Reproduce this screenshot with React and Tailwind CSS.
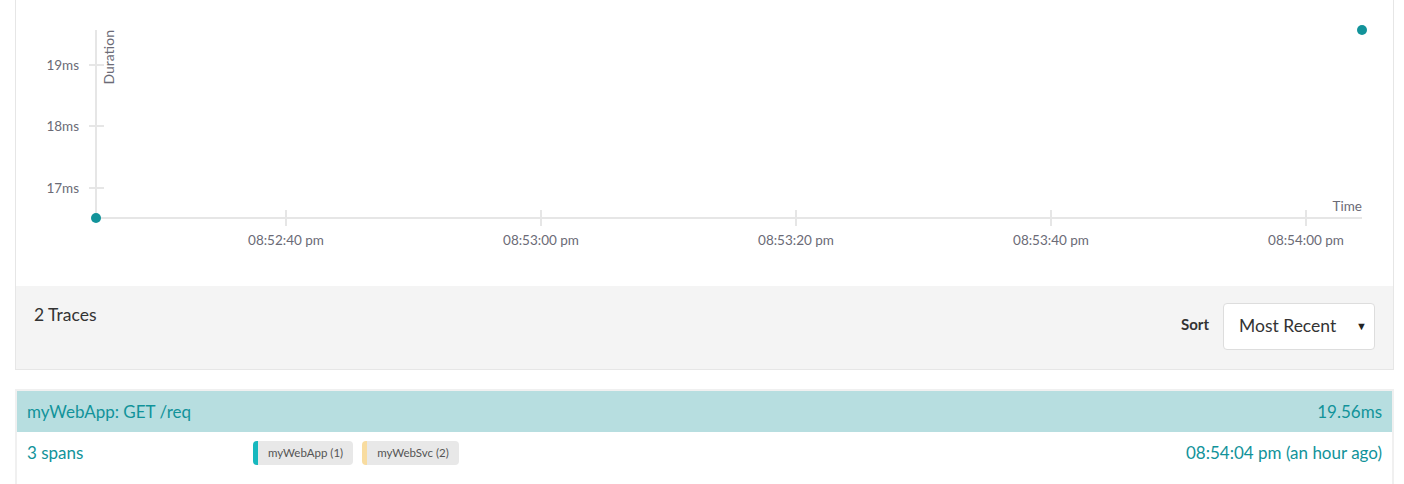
import React from 'react';

const TEAL = '#12939a';
const AXIS = '#e6e6e6';
const LABEL = '#6b6b76';

const yTicks = [
  { y: 65, label: '19ms' },
  { y: 126, label: '18ms' },
  { y: 188, label: '17ms' },
];

const xTicks = [
  { x: 286, label: '08:52:40 pm' },
  { x: 541, label: '08:53:00 pm' },
  { x: 796, label: '08:53:20 pm' },
  { x: 1051, label: '08:53:40 pm' },
  { x: 1306, label: '08:54:00 pm' },
];

function ScatterPlot() {
  return (
    <svg width="1376" height="286" viewBox="16 0 1376 286" className="block">
      <g fontFamily="Lato, sans-serif" fill={LABEL}>
        {yTicks.map((t) => (
          <g key={t.label}>
            <line x1="89" x2="104" y1={t.y} y2={t.y} stroke={AXIS} strokeWidth="2" />
            <text x="79" y={t.y + 5} textAnchor="end" fontSize="13.5">{t.label}</text>
          </g>
        ))}
        {xTicks.map((t) => (
          <g key={t.label}>
            <line x1={t.x} x2={t.x} y1="210" y2="226" stroke={AXIS} strokeWidth="2" />
            <text x={t.x} y="245" textAnchor="middle" fontSize="13.5">{t.label}</text>
          </g>
        ))}
        <line x1="96" x2="96" y1="30" y2="218" stroke={AXIS} strokeWidth="2" />
        <line x1="96" x2="1362" y1="218" y2="218" stroke={AXIS} strokeWidth="2" />
        <text x="0" y="0" fontSize="14" textAnchor="end" transform="translate(114 30) rotate(-90)">Duration</text>
        <text x="1362" y="211" fontSize="13.5" textAnchor="end">Time</text>
      </g>
      <circle cx="96" cy="218" r="5" fill={TEAL} />
      <circle cx="1362" cy="30" r="5" fill={TEAL} />
    </svg>
  );
}

function ServiceTag({ name, count, color }) {
  return (
    <span
      className="inline-flex items-center h-6 pl-[10px] pr-[10px] rounded bg-[#e8e8e8] text-[11.5px] text-[#555] border-l-[5px]"
      style={{ borderLeftColor: color }}
    >
      {name} ({count})
    </span>
  );
}

export default function App() {
  return (
    <div className="w-[1404px] h-[484px] overflow-hidden bg-white font-['Lato',sans-serif]">
      <div className="ml-[15px] w-[1379px] border border-t-0 border-[#e6e6e6]">
        <ScatterPlot />
        <div className="bg-[#f4f4f4] h-[83px] flex items-start justify-between pl-[18px] pr-[18px]">
          <div className="pt-[16px] text-[17.5px] text-[#333]">2 Traces</div>
          <div className="flex items-center gap-[14px] pt-[17px]">
            <span className="text-[15px] font-bold text-[#333] -mt-[4px]">Sort</span>
            <div className="relative w-[152px] h-[47px] bg-white border border-[#ddd] rounded flex items-center pl-[15px] text-[17.5px] text-[#333]">
              Most Recent
              <span className="absolute right-[7px] top-[14px] text-[11px] text-[#222]">▼</span>
            </div>
          </div>
        </div>
      </div>

      <div className="ml-[15px] mt-[19px] w-[1379px] border-2 border-b-0 border-[#f0f0f0]">
        <div className="bg-[#b7dee0] h-[41px] flex items-center justify-between px-[10px] text-[17px] text-[#11939a]">
          <span>myWebApp: GET /req</span>
          <span>19.56ms</span>
        </div>
        <div className="h-[60px] flex items-start px-[10px] pt-[9px] text-[17px] text-[#11939a]">
          <span className="w-[226px] leading-[24px]">3 spans</span>
          <div className="flex gap-[9px]">
            <ServiceTag name="myWebApp" count={1} color="#17b8be" />
            <ServiceTag name="myWebSvc" count={2} color="#f8dca0" />
          </div>
          <span className="ml-auto leading-[24px]">08:54:04 pm (an hour ago)</span>
        </div>
      </div>
    </div>
  );
}
